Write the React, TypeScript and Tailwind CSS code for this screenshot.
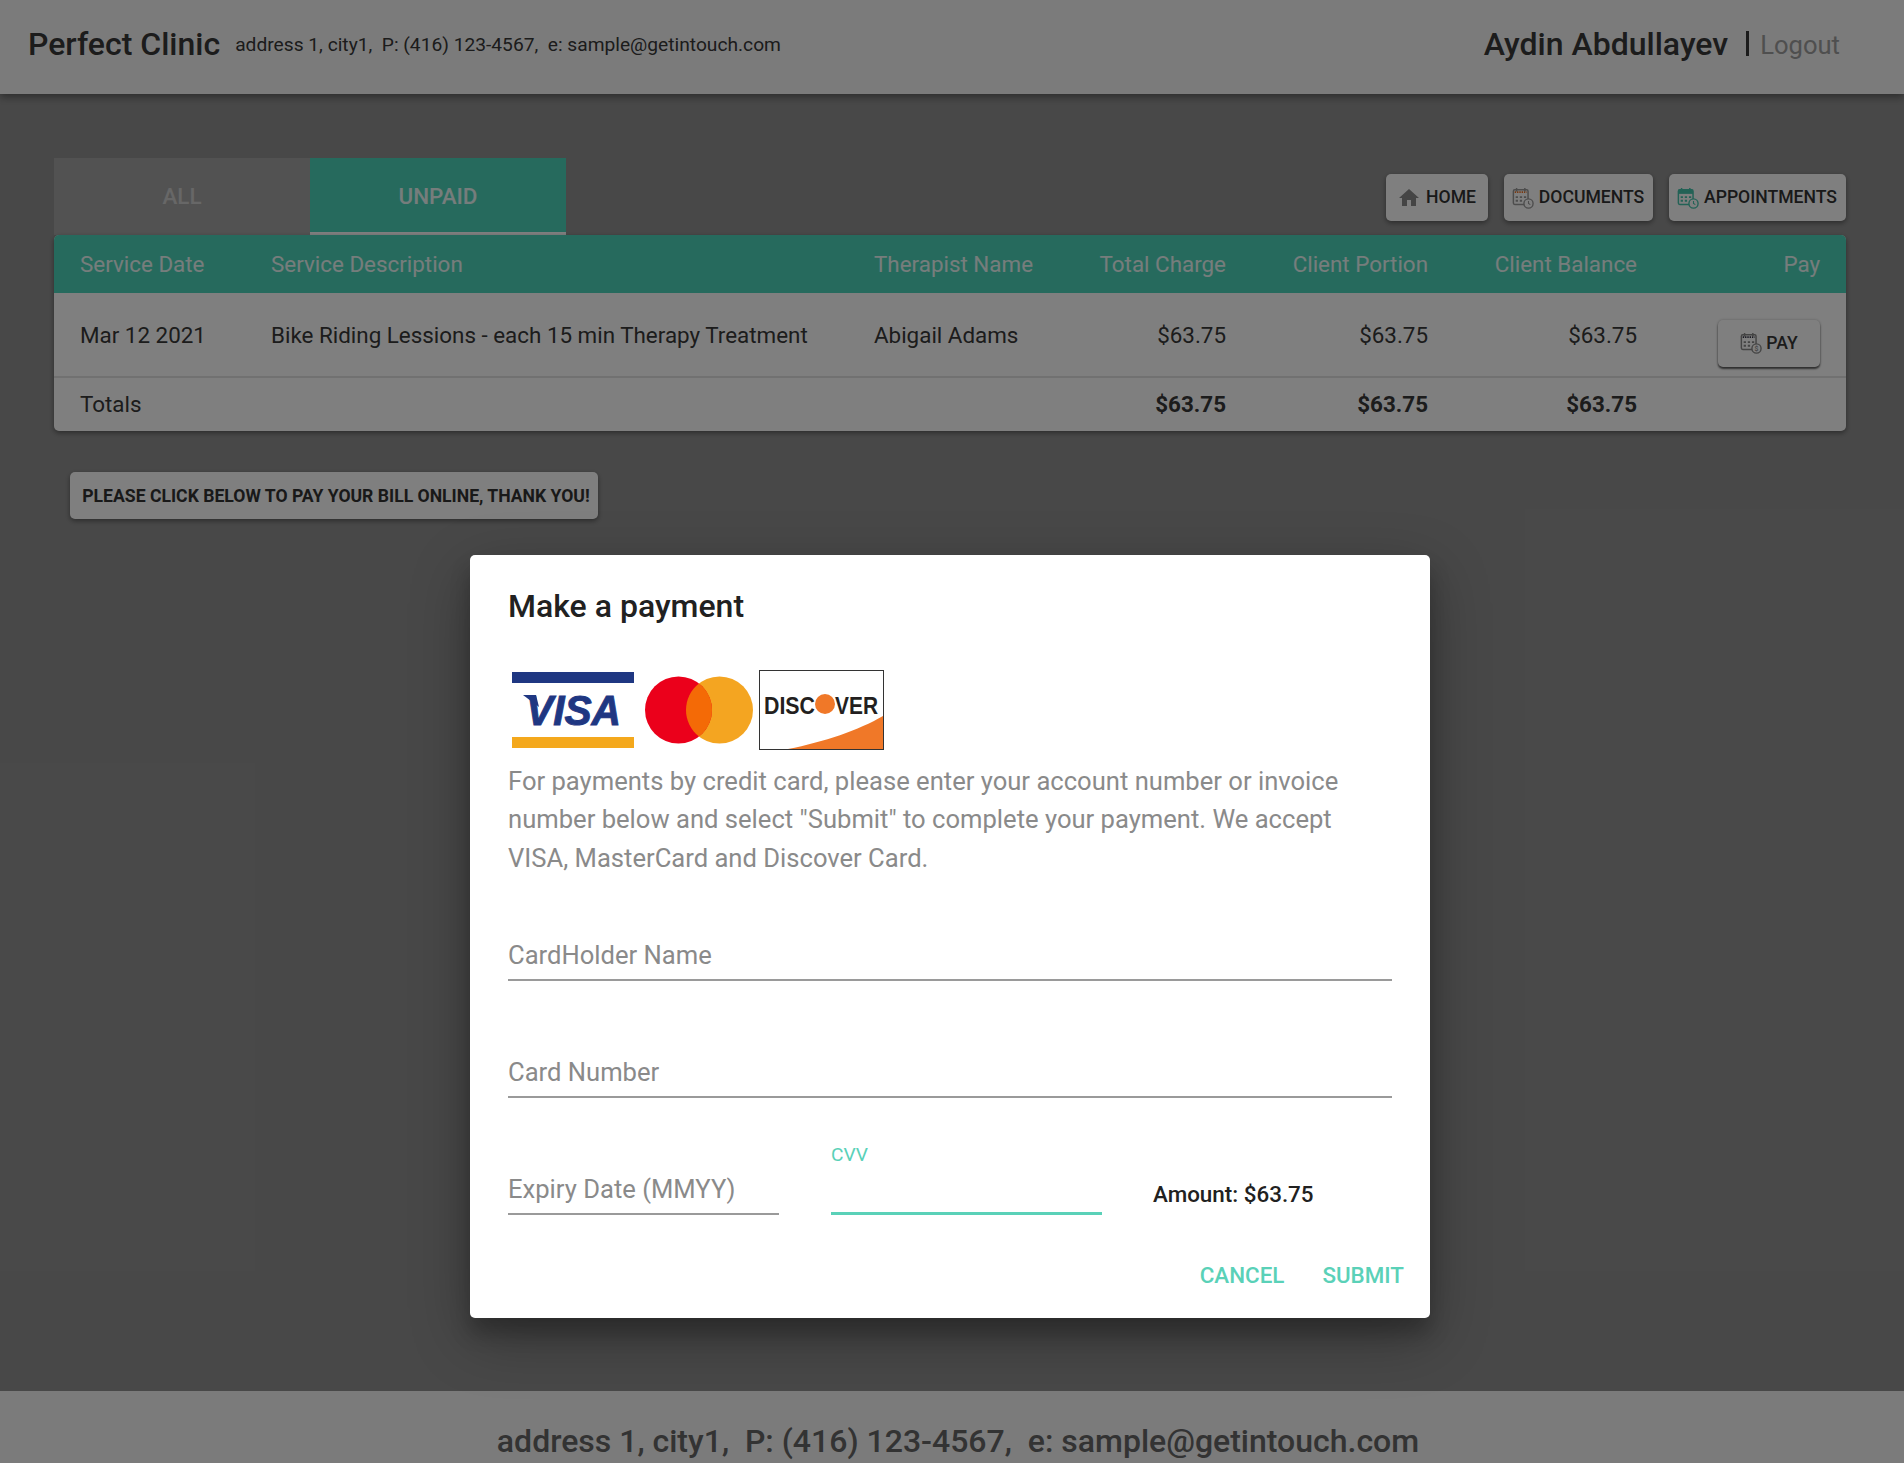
import { MdHome } from "react-icons/md";

const columns = [191, 603, 226, 178, 202, 209, 183];

function CalendarClock({ color, top, dots, dollar, className }: { color: string; top: string; dots?: boolean; dollar?: boolean; className?: string }) {
  return (
    <svg viewBox="0 0 24 24" className={className} fill="none">
      <rect x="1.5" y="3" width="16" height="16" rx="1.5" stroke={color} strokeWidth="1.6" />
      {dots ? (
        <path d="M3 5.5h13" stroke={top} strokeWidth="2" strokeDasharray="1.5 1" />
      ) : (
        <rect x="1.5" y="3" width="16" height="4.5" fill={top} />
      )}
      <path d="M5 1v4M14 1v4" stroke={color} strokeWidth="1.6" />
      <path d="M4 10h2.5v2H4zM8.5 10H11v2H8.5zM13 10h2.5v2H13zM4 14h2.5v2H4zM8.5 14H11v2H8.5z" fill={color} />
      <circle cx="18" cy="18" r="5" fill="#fff" stroke={color} strokeWidth="1.5" />
      {dollar ? (
        <text x="18" y="20.6" textAnchor="middle" fontSize="7.5" fontFamily="Roboto, sans-serif" fontWeight="500" fill={color}>$</text>
      ) : (
        <path d="M18 15.2V18l2 1.2" stroke={color} strokeWidth="1.2" />
      )}
    </svg>
  );
}

function NavButton({ icon, label, className }: { icon: React.ReactNode; label: string; className: string }) {
  return (
    <button className={`flex h-[47px] items-center justify-center gap-[5px] rounded-[5px] bg-white pr-[1px] text-[17.6px] font-medium text-[#333] shadow-[0_2px_5px_rgba(0,0,0,0.4)] ${className}`}>
      {icon}
      {label}
    </button>
  );
}

function CardLogos() {
  return (
    <div className="mt-[44px] flex h-[80px] items-center">
      <svg viewBox="0 0 122 76" className="ml-[4px] h-[76px] w-[122px]">
        <rect width="122" height="11" fill="#1f3782" />
        <rect y="65" width="122" height="11" fill="#f4a81c" />
        <path d="M11 23h13l3 12z" fill="#1f3782" />
        <text x="14" y="53" fontFamily="Liberation Sans, sans-serif" fontWeight="700" fontStyle="italic" fontSize="43" textLength="95" lengthAdjust="spacingAndGlyphs" fill="#1f3782" stroke="#1f3782" strokeWidth="1">VISA</text>
      </svg>
      <svg viewBox="0 0 108 68" className="ml-[11px] h-[68px] w-[108px]">
        <circle cx="74.5" cy="34" r="33.5" fill="#f4a521" />
        <circle cx="33.5" cy="34" r="33.5" fill="#eb001b" />
        <path d="M54 7.5a33.5 33.5 0 0 1 0 53a33.5 33.5 0 0 1 0-53z" fill="#f46a06" />
      </svg>
      <svg viewBox="0 0 125 80" className="ml-[6px] h-[80px] w-[125px]">
        <rect x="0.5" y="0.5" width="124" height="79" fill="#fff" stroke="#333" />
        <path d="M29 79C65 72 100 60 124 46V79z" fill="#f07828" />
        <text x="5" y="43.5" fontFamily="Liberation Sans, sans-serif" fontWeight="700" fontSize="24" textLength="51" lengthAdjust="spacingAndGlyphs" fill="#231f20">DISC</text>
        <circle cx="66" cy="34" r="10" fill="#f07828" />
        <text x="76" y="43.5" fontFamily="Liberation Sans, sans-serif" fontWeight="700" fontSize="24" textLength="43" lengthAdjust="spacingAndGlyphs" fill="#231f20">VER</text>
      </svg>
    </div>
  );
}

function Field({ label, className }: { label: string; className?: string }) {
  return (
    <div className={`flex h-[49px] items-start border-b-2 border-[#9a9a9a] pt-[5px] text-[25.6px] leading-[36px] text-[#8a8a8a] ${className ?? ""}`}>
      {label}
    </div>
  );
}

export default function App() {
  return (
    <div className="relative flex h-[1463px] flex-col overflow-hidden bg-[#919191] font-['Roboto',sans-serif] text-[#383838]">
      <header className="flex h-[94px] shrink-0 items-center justify-between bg-[#f6f6f6] pb-[6px] pl-[28px] pr-[64px] shadow-[0_3px_8px_rgba(0,0,0,0.4)]">
        <div className="flex items-center gap-[15px]">
          <span className="text-[32px] font-medium leading-none">Perfect Clinic</span>
          <span className="mt-[2px] whitespace-pre text-[19.2px]">address 1, city1,  P: (416) 123-4567,  e: sample@getintouch.com</span>
        </div>
        <div className="flex items-center">
          <span className="text-[32px] font-medium leading-none">Aydin Abdullayev</span>
          <span className="ml-[18px] h-[25px] w-[3px] bg-[#383838]" />
          <span className="ml-[11px] mt-[3px] text-[25.6px] text-[#9e9e9e]">Logout</span>
        </div>
      </header>

      <main className="flex flex-1 flex-col pl-[54px] pr-[58px] pt-[64px]">
        <div className="flex h-[77px] items-center justify-between">
          <div className="flex self-stretch">
            <div className="flex w-[256px] items-center justify-center bg-[#a5a5a5] pt-[1px] text-[22.4px] font-medium text-[#cfcfcf]">ALL</div>
            <div className="flex w-[256px] items-center justify-center border-b-[3px] border-white bg-[#4cd4bb] pt-[4px] text-[22.4px] font-medium text-white/90">UNPAID</div>
          </div>
          <div className="flex gap-[16px] pt-[2px]">
            <NavButton className="w-[102px]" icon={<MdHome className="h-[24px] w-[24px] text-[#8a8a8a]" />} label="HOME" />
            <NavButton className="w-[149px]" icon={<CalendarClock color="#9a9a9a" top="#f07020" dots className="h-[22px] w-[22px]" />} label="DOCUMENTS" />
            <NavButton className="w-[177px]" icon={<CalendarClock color="#46c4ac" top="#46c4ac" className="h-[22px] w-[22px]" />} label="APPOINTMENTS" />
          </div>
        </div>

        <div className="overflow-hidden rounded-[5px] bg-white shadow-[0_2px_5px_rgba(0,0,0,0.4)]">
          <table className="w-full table-fixed border-collapse text-[22.4px]">
            <colgroup>
              {columns.map((w, i) => (
                <col key={i} style={{ width: w }} />
              ))}
            </colgroup>
            <thead>
              <tr className="h-[58px] bg-[#4cd4bb] text-white/90">
                <th className="pl-[26px] pt-[2px] text-left font-normal">Service Date</th>
                <th className="pl-[26px] pt-[2px] text-left font-normal">Service Description</th>
                <th className="pl-[26px] pt-[2px] text-left font-normal">Therapist Name</th>
                <th className="pr-[26px] pt-[2px] text-right font-normal">Total Charge</th>
                <th className="pr-[26px] pt-[2px] text-right font-normal">Client Portion</th>
                <th className="pr-[26px] pt-[2px] text-right font-normal">Client Balance</th>
                <th className="pr-[26px] pt-[2px] text-right font-normal">Pay</th>
              </tr>
            </thead>
            <tbody>
              <tr className="h-[84px] border-b-2 border-[#e2e2e2]">
                <td className="pl-[26px] pt-[2px]">Mar 12 2021</td>
                <td className="whitespace-nowrap pl-[26px] pt-[2px]">Bike Riding Lessions - each 15 min Therapy Treatment</td>
                <td className="pl-[26px] pt-[2px]">Abigail Adams</td>
                <td className="pr-[26px] pt-[2px] text-right">$63.75</td>
                <td className="pr-[26px] pt-[2px] text-right">$63.75</td>
                <td className="pr-[26px] pt-[2px] text-right">$63.75</td>
                <td className="pr-[26px]">
                  <div className="flex justify-end pt-[17px]">
                    <button className="flex h-[47px] w-[102px] items-center justify-center gap-[4px] rounded-[5px] bg-white text-[17.6px] font-medium shadow-[0_2px_2px_rgba(0,0,0,0.6),0_0_3px_rgba(0,0,0,0.25)]">
                      <CalendarClock color="#888" top="#334" dots dollar className="h-[22px] w-[22px]" />
                      PAY
                    </button>
                  </div>
                </td>
              </tr>
              <tr className="h-[54px]">
                <td className="pl-[26px]">Totals</td>
                <td />
                <td />
                <td className="pr-[26px] text-right font-bold">$63.75</td>
                <td className="pr-[26px] text-right font-bold">$63.75</td>
                <td className="pr-[26px] text-right font-bold">$63.75</td>
                <td />
              </tr>
            </tbody>
          </table>
        </div>

        <button className="ml-[16px] mt-[41px] h-[47px] w-[528px] rounded-[5px] bg-white pl-[4px] pt-[1px] text-[17.6px] font-bold text-[#333] shadow-[0_2px_5px_rgba(0,0,0,0.4)]">
          PLEASE CLICK BELOW TO PAY YOUR BILL ONLINE, THANK YOU!
        </button>
      </main>

      <footer className="flex h-[72px] shrink-0 items-start justify-center whitespace-pre bg-[#f6f6f6] pl-[12px] pt-[30px] text-[32px] font-medium leading-[40px] text-[#666]">
        address 1, city1,  P: (416) 123-4567,  e: sample@getintouch.com
      </footer>

      {/* dialog */}
      <div className="absolute inset-0 flex justify-center bg-black/50 pr-[4px] pt-[555px]">
        <div className="h-[763px] w-[960px] rounded-[5px] bg-white px-[38px] pt-[31px] text-[#212121] shadow-[0_19px_60px_rgba(0,0,0,0.3),0_15px_20px_rgba(0,0,0,0.22)]">
          <h2 className="text-[32px] font-medium leading-[40px]">Make a payment</h2>
          <CardLogos />
          <p className="mt-[12px] text-[25.6px] leading-[38.4px] text-[#8a8a8a]">
            For payments by credit card, please enter your account number or invoice number below and select "Submit" to complete your payment. We accept VISA, MasterCard and Discover Card.
          </p>
          <Field label="CardHolder Name" className="mt-[55px]" />
          <Field label="Card Number" className="mt-[68px]" />
          <div className="mt-[68px] flex items-start">
            <Field label="Expiry Date (MMYY)" className="w-[271px]" />
            <div className="relative ml-[52px] h-[49px] w-[271px] border-b-[3px] border-[#5ad1b8]">
              <span className="absolute left-0 top-[-23px] text-[19.2px] leading-[24px] text-[#5ad1b8]">CVV</span>
            </div>
            <span className="ml-[51px] pt-[12px] text-[22.4px] font-medium leading-[32px]">Amount: $63.75</span>
          </div>
          <div className="mt-[45px] flex justify-end gap-[38px] text-[22.4px] font-medium leading-[30px] text-[#5ad1b8]">
            <span>CANCEL</span>
            <span className="-mr-[12px]">SUBMIT</span>
          </div>
        </div>
      </div>
    </div>
  );
}
